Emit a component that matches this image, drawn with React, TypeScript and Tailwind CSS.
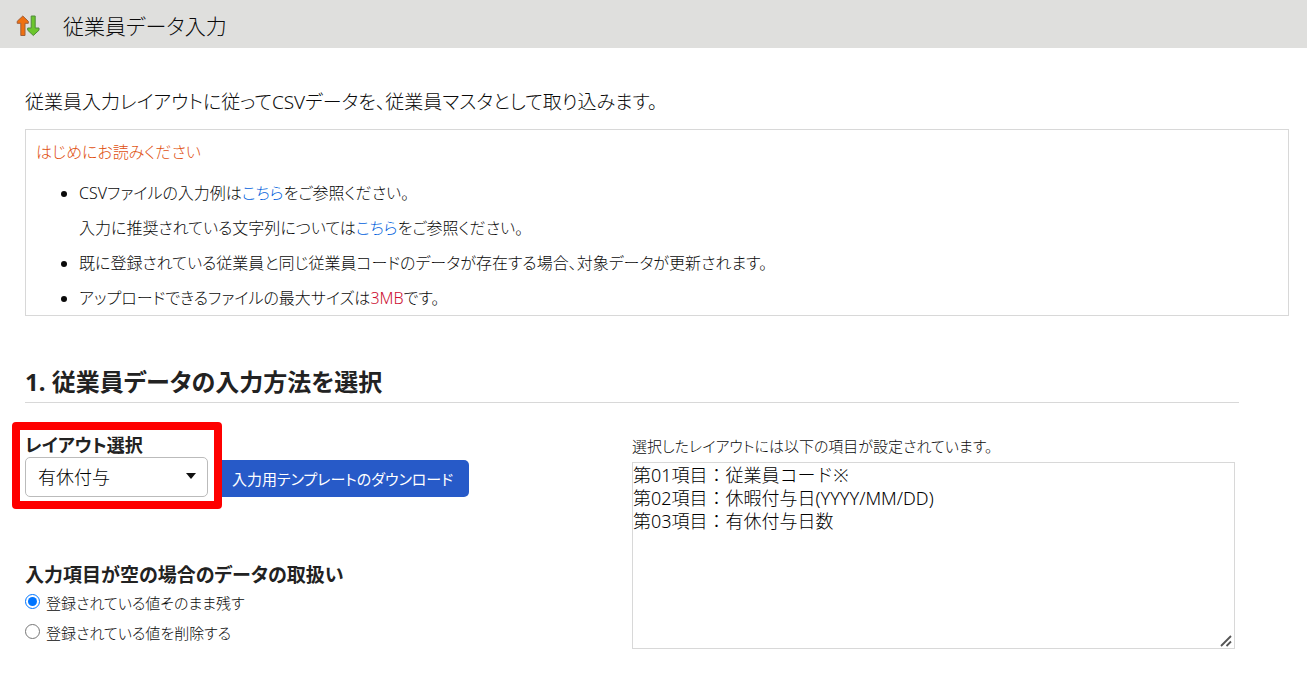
import { useState } from "react";

const layouts = [
  {
    name: "有休付与",
    items: "第01項目：従業員コード※\n第02項目：休暇付与日(YYYY/MM/DD)\n第03項目：有休付与日数",
  },
];

const ImportIcon = () => (
  <svg width="24" height="22" viewBox="0 0 24 22" aria-hidden="true">
    <path d="M6.8 1 L12.3 6.3 V8.3 H9 V20.5 H4.8 V8.3 H1.2 V6.3 Z" fill="#f0700f" stroke="#a0603a" strokeWidth="1" strokeLinejoin="round" />
    <path d="M15.2 1 H19.2 V13 H23 V15.2 L17.3 20.5 L11.7 15.2 V13 H15.2 Z" fill="#6cc62c" stroke="#4f8a3a" strokeWidth="1" strokeLinejoin="round" />
  </svg>
);

interface RadioProps {
  id: string;
  label: string;
  checked: boolean;
  onChange: () => void;
}

const Radio = ({ id, label, checked, onChange }: RadioProps) => (
  <div className="flex items-start gap-1.5 h-[30px]">
    <input type="radio" id={id} name="emptyValue" className="mt-[5px] size-[15px] shrink-0" checked={checked} onChange={onChange} />
    <label htmlFor={id} className="text-[15px] leading-7">
      {label}
    </label>
  </div>
);

const App = () => {
  const [layout, setLayout] = useState(0);
  const [emptyValue, setEmptyValue] = useState("keep");
  const [items, setItems] = useState(layouts[0].items);

  const handleLayout = (e: React.ChangeEvent<HTMLSelectElement>) => {
    const index = Number(e.target.value);
    setLayout(index);
    setItems(layouts[index].items);
  };

  return (
    <div
      lang="ja"
      className="min-h-screen bg-white font-['Noto_Sans','Noto_Sans_CJK_JP',sans-serif] font-light text-[#0a0a0a] [font-feature-settings:'palt']"
    >
      <header className="flex items-center gap-[23px] h-12 px-4 pt-1 bg-[#dfdfdd]">
        <ImportIcon />
        <h1 className="text-[21px] leading-8">従業員データ入力</h1>
      </header>

      <main className="pt-10 pl-[25px] pr-[18px]">
        <p className="text-[19px] leading-7">従業員入力レイアウトに従ってCSVデータを、従業員マスタとして取り込みます。</p>

        <section className="mt-[13px] border border-[#d8d8d8] pt-2 px-2.5 text-base">
          <p className="leading-7 text-[#e0500f]">はじめにお読みください</p>
          <ul className="mt-2.5 -mb-px pl-[43px] list-disc leading-[35px]">
            <li>
              CSVファイルの入力例は
              <a href="#example" className="text-[#005fdc]">こちら</a>
              をご参照ください。
              <br />
              入力に推奨されている文字列については
              <a href="#characters" className="text-[#005fdc]">こちら</a>
              をご参照ください。
            </li>
            <li>既に登録されている従業員と同じ従業員コードのデータが存在する場合、対象データが更新されます。</li>
            <li>
              アップロードできるファイルの最大サイズは<span className="text-[#cc0f32]">3MB</span>です。
            </li>
          </ul>
        </section>

        <section className="mt-12 mr-[50px]">
          <h2 className="border-b border-[#d8d8d8] pb-0.5 text-2xl leading-9 font-bold text-[#222]">1. 従業員データの入力方法を選択</h2>

          <div className="mt-[30px] grid grid-cols-2">
            <div>
              <div className="flex items-end gap-2">
                <div className="relative">
                  <label htmlFor="layout" className="block text-[18px] leading-6 font-bold text-[#222]">
                    レイアウト選択
                  </label>
                  <div className="relative">
                    <select
                      id="layout"
                      value={layout}
                      onChange={handleLayout}
                      className="block w-[183px] h-10 pl-3 pt-px appearance-none rounded-[5px] border border-[#bbb] bg-white text-[18px] text-black"
                    >
                      {layouts.map((l, i) => (
                        <option key={l.name} value={i}>
                          {l.name}
                        </option>
                      ))}
                    </select>
                    <svg width="10" height="6" viewBox="0 0 10 6" className="absolute right-3 top-4 pointer-events-none" aria-hidden="true">
                      <path d="M0 0 H10 L5 6 Z" fill="#111" />
                    </svg>
                  </div>
                  <div className="absolute -top-[11px] -left-[13px] -right-[14px] -bottom-3 border-8 border-[#fe0000] rounded pointer-events-none"></div>
                </div>
                <button type="button" className="h-[37px] px-4 pt-0.5 rounded-[5px] bg-[#275ac8] text-[15px] font-normal text-white">
                  入力用テンプレートのダウンロード
                </button>
              </div>

              <fieldset className="mt-16">
                <legend className="text-[19px] leading-7 font-bold text-[#222]">入力項目が空の場合のデータの取扱い</legend>
                <Radio id="keep" label="登録されている値そのまま残す" checked={emptyValue === "keep"} onChange={() => setEmptyValue("keep")} />
                <Radio id="remove" label="登録されている値を削除する" checked={emptyValue === "remove"} onChange={() => setEmptyValue("remove")} />
              </fieldset>
            </div>

            <div className="pr-1">
              <label htmlFor="items" className="block pb-0.5 text-[15px] leading-[27px]">
                選択したレイアウトには以下の項目が設定されています。
              </label>
              <div className="relative">
                <textarea
                  id="items"
                  value={items}
                  onChange={(e) => setItems(e.target.value)}
                  className="block w-full h-[187px] pt-px resize-y border border-[#d8d8d8] text-[18px] leading-[23px] text-black [font-feature-settings:normal] [&::-webkit-resizer]:bg-white"
                />
                <svg width="12" height="12" viewBox="0 0 12 12" className="absolute right-[3px] bottom-[2px] pointer-events-none" aria-hidden="true">
                  <path d="M1 11 L11 1 M6.5 11 L11 6.5" stroke="#555" strokeWidth="1.8" />
                </svg>
              </div>
            </div>
          </div>
        </section>
      </main>
    </div>
  );
};

export default App;
